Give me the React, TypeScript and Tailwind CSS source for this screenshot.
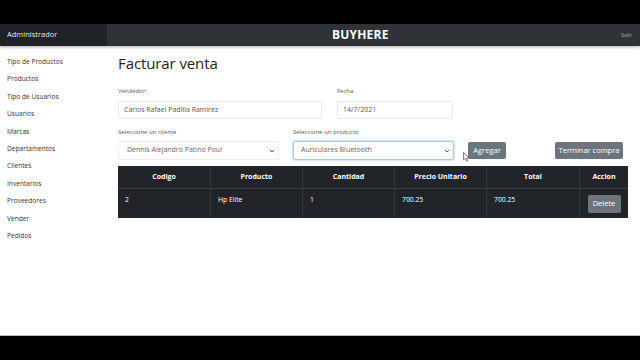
import React from "react";

const items = [
  "Tipo de Productos",
  "Productos",
  "Tipo de Usuarios",
  "Usuarios",
  "Marcas",
  "Departamentos",
  "Clientes",
  "Inventarios",
  "Proveedores",
  "Vender",
  "Pedidos",
];

const cols = ["Codigo", "Producto", "Cantidad", "Precio Unitario", "Total", "Accion"];

function Chevron() {
  return (
    <svg width="6" height="4" viewBox="0 0 6 4" className="shrink-0">
      <path d="M0.8 0.8 L3 3 L5.2 0.8" stroke="#444" strokeWidth="0.9" fill="none" />
    </svg>
  );
}

export default function App() {
  return (
    <div
      className="relative w-[640px] h-[360px] bg-black flex flex-col overflow-hidden"
      style={{ fontFamily: '"Open Sans", "Noto Sans", sans-serif' }}
    >
      <div className="h-[24px] shrink-0 bg-black" />
      <div className="h-[22px] shrink-0 flex bg-[#2f3338] shadow-[0_1px_3px_rgba(0,0,0,0.35)] z-10">
        <div className="w-[107px] bg-[#1f2226] flex items-center pl-[7px] text-[7.5px] text-[#e8e8e8]">
          Administrador
        </div>
        <div className="flex-1 flex items-center">
          <div className="ml-[225px] text-[12px] font-bold text-white tracking-[0.2px]">BUYHERE</div>
          <div className="ml-auto mr-[8px] text-[5.5px] text-[#aaa]">Salir</div>
        </div>
      </div>
      <div className="h-[289px] shrink-0 bg-white flex">
        <div className="w-[107px] shrink-0 pt-[11px] pl-[7px] flex flex-col">
          {items.map((t) => (
            <div key={t} className="h-[17.4px] flex items-start text-[6.6px] text-[#333] leading-[10px]">
              {t}
            </div>
          ))}
        </div>
        <div className="ml-[11px] flex-1 flex flex-col">
          <div className="mt-[6px] text-[15px] font-medium text-[#222] leading-[22px] tracking-[-0.1px]">Facturar venta</div>
          <div className="mt-[13px] flex gap-[15px]">
            <div className="w-[204px] flex flex-col">
              <div className="text-[6px] text-[#555] leading-[8px]">Vendedor:</div>
              <div className="mt-[6px] h-[18px] border border-[#e6e8ea] rounded-[2px] flex items-center pl-[5px] text-[7px] text-[#555]">
                Carlos Rafael Padilla Ramirez
              </div>
            </div>
            <div className="w-[116px] flex flex-col">
              <div className="text-[6px] text-[#555] leading-[8px]">Fecha</div>
              <div className="mt-[6px] h-[18px] border border-[#e6e8ea] rounded-[2px] flex items-center pl-[5px] text-[7px] text-[#555]">
                14/7/2021
              </div>
            </div>
          </div>
          <div className="mt-[9px] flex items-end">
            <div className="w-[161px] flex flex-col">
              <div className="text-[6px] text-[#555] leading-[8px]">Seleccione un cliente</div>
              <div className="mt-[5px] h-[19px] border border-[#eceef0] rounded-[2px] flex items-center pl-[8px] pr-[3px] text-[7px] text-[#666]">
                <span className="flex-1">Dennis Alejandro Patino Poul</span>
                <Chevron />
              </div>
            </div>
            <div className="ml-[14px] w-[161px] flex flex-col">
              <div className="text-[6px] text-[#555] leading-[8px]">Seleccione un producto</div>
              <div className="mt-[5px] h-[19px] border border-[#9fcbe6] shadow-[0_0_0_1px_rgba(140,190,230,0.35)] rounded-[2px] flex items-center pl-[7px] pr-[3px] text-[7px] text-[#666]">
                <span className="flex-1">Auriculares Bluetooth</span>
                <Chevron />
              </div>
            </div>
            <div className="ml-[14px] mb-[1px] w-[38px] h-[17px] bg-[#6c757d] rounded-[2px] flex items-center justify-center text-[7.5px] text-white">
              Agregar
            </div>
            <div className="ml-[49px] mb-[1px] w-[68px] h-[17px] bg-[#6c757d] rounded-[2px] flex items-center justify-center text-[7.5px] text-white">
              Terminar compra
            </div>
          </div>
          <div className="mt-[6px] w-[510px] bg-[#212529] grid grid-cols-[92px_92px_92px_92px_93px_1fr]">
            {cols.map((c, i) => (
              <div
                key={c}
                className={`h-[23px] flex items-center justify-center text-[7px] font-bold text-white border-b border-[#3a3f44] ${i > 0 ? "border-l border-l-[#32373c]" : ""}`}
              >
                {c}
              </div>
            ))}
            {["2", "Hp Elite", "1", "700.25", "700.25"].map((v, i) => (
              <div
                key={i}
                className={`h-[29px] flex items-start pt-[6px] pl-[7px] text-[6.8px] text-white ${i > 0 ? "border-l border-[#32373c]" : ""}`}
              >
                {v}
              </div>
            ))}
            <div className="h-[29px] flex items-center justify-center border-l border-[#32373c]">
              <div className="w-[33px] h-[18px] bg-[#6c757d] rounded-[2px] flex items-center justify-center text-[7.5px] text-white">
                Delete
              </div>
            </div>
          </div>
        </div>
      </div>
      <div className="h-px bg-[#bbb] shrink-0" />
      <div className="flex-1 bg-black" />
      <svg className="absolute left-[463px] top-[152px]" width="7" height="10" viewBox="0 0 7 10">
        <path d="M0.5 0.5 L0.5 8 L2.3 6.3 L3.6 9.2 L4.8 8.7 L3.6 5.9 L6 5.9 Z" fill="white" stroke="#333" strokeWidth="0.6" />
      </svg>
    </div>
  );
}
